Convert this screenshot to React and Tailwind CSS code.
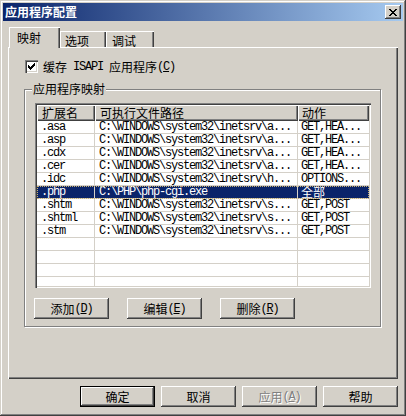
import React from 'react'

const rows = [
  ['.asa', 'C:\\WINDOWS\\system32\\inetsrv\\a...', 'GET,HEA...'],
  ['.asp', 'C:\\WINDOWS\\system32\\inetsrv\\a...', 'GET,HEA...'],
  ['.cdx', 'C:\\WINDOWS\\system32\\inetsrv\\a...', 'GET,HEA...'],
  ['.cer', 'C:\\WINDOWS\\system32\\inetsrv\\a...', 'GET,HEA...'],
  ['.idc', 'C:\\WINDOWS\\system32\\inetsrv\\h...', 'OPTIONS...'],
  ['.php', 'C:\\PHP\\php-cgi.exe', '全部', true],
  ['.shtm', 'C:\\WINDOWS\\system32\\inetsrv\\s...', 'GET,POST'],
  ['.shtml', 'C:\\WINDOWS\\system32\\inetsrv\\s...', 'GET,POST'],
  ['.stm', 'C:\\WINDOWS\\system32\\inetsrv\\s...', 'GET,POST'],
  ['', '', ''],
  ['', '', ''],
  ['', '', ''],
  ['', '', ''],
]

function Mono({ children, className = '' }) {
  return (
    <span className={`font-['Liberation_Mono',monospace] text-[12px] leading-[12px] tracking-[-1.2px] ${className}`}>
      {children}
    </span>
  )
}

function Pixels({ map, className = '' }) {
  const cells = []
  map.forEach((line, y) => {
    line.split('').forEach((c, x) => {
      if (c === '#') cells.push(<rect key={`${x}-${y}`} x={x} y={y} width="1" height="1" />)
    })
  })
  return (
    <svg
      width={map[0].length}
      height={map.length}
      viewBox={`0 0 ${map[0].length} ${map.length}`}
      shapeRendering="crispEdges"
      className={className}
      fill="currentColor"
    >
      {cells}
    </svg>
  )
}

const closeGlyph = [
  '##....##',
  '.##..##.',
  '..####..',
  '...##...',
  '..####..',
  '.##..##.',
  '##....##',
]

const checkGlyph = [
  '......#',
  '.....##',
  '#...###',
  '##.###.',
  '#####..',
  '.###...',
  '..#....',
]

function Accel({ letter }) {
  return (
    <Mono>
      (<span className="underline underline-offset-1">{letter}</span>)
    </Mono>
  )
}

function Btn({ children, isDefault, disabled }) {
  return (
    <div className={`h-[21px] w-[75px] ${isDefault ? 'border border-black' : ''}`}>
      <div
        className={`flex h-full w-full items-center justify-center leading-[13px] shadow-[inset_-1px_-1px_0_#404040,inset_1px_1px_0_#fff,inset_-2px_-2px_0_#808080] ${
          disabled ? 'text-[#808080] [text-shadow:1px_1px_0_#fff]' : ''
        }`}
      >
        {children}
      </div>
    </div>
  )
}

export default function App() {
  return (
    <div className="h-[416px] w-[406px] bg-[#d4d0c8] p-[3px] font-['Noto_Sans_CJK_SC',sans-serif] text-[12px] text-black shadow-[inset_-1px_-1px_0_#404040,inset_1px_1px_0_#d4d0c8,inset_-2px_-2px_0_#808080,inset_2px_2px_0_#fff]">
      {/* title bar */}
      <div className="flex h-[18px] items-center justify-between bg-[linear-gradient(90deg,#0a246a,#a6caf0)] pr-[2px] pl-[2px]">
        <span className="text-[12px] leading-[14px] font-bold text-white">应用程序配置</span>
        <div className="flex h-[14px] w-[16px] items-center justify-center bg-[#d4d0c8] pt-[1px] text-black shadow-[inset_-1px_-1px_0_#404040,inset_1px_1px_0_#fff,inset_-2px_-2px_0_#808080]">
          <Pixels map={closeGlyph} />
        </div>
      </div>

      {/* tabs */}
      <div className="mt-[6px] ml-[6px] flex h-[20px] items-end">
        <div className="relative z-10 -mb-[1px] flex h-[21px] w-[51px] items-start bg-[#d4d0c8] pt-[4px] pl-[8px] leading-[13px] shadow-[inset_1px_1px_0_#fff,inset_-1px_0_0_#404040,inset_-2px_0_0_#808080]">
          映射
        </div>
        <div className="flex h-[16px] w-[46px] items-start pt-[3px] pl-[5px] leading-[13px] shadow-[inset_1px_1px_0_#fff,inset_-1px_0_0_#404040,inset_-2px_0_0_#808080]">
          选项
        </div>
        <div className="flex h-[16px] w-[48px] items-start pt-[3px] pl-[6px] leading-[13px] shadow-[inset_1px_1px_0_#fff,inset_-1px_0_0_#404040,inset_-2px_0_0_#808080]">
          调试
        </div>
      </div>

      {/* tab panel */}
      <div className="mx-[5px] h-[332px] pt-[13px] shadow-[inset_1px_1px_0_#fff,inset_-1px_-1px_0_#404040,inset_-2px_-2px_0_#808080]">
        <div className="ml-[17px] flex h-[13px] items-center gap-[5px]">
          <div className="flex h-[13px] w-[13px] items-center justify-center bg-white shadow-[inset_1px_1px_0_#808080,inset_2px_2px_0_#404040,inset_-1px_-1px_0_#fff,inset_-2px_-2px_0_#d4d0c8]">
            <Pixels map={checkGlyph} />
          </div>
          <span className="flex items-center leading-[13px]">
            缓存<Mono>&nbsp;ISAPI&nbsp;</Mono>应用程序<Accel letter="C" />
          </span>
        </div>

        {/* group box */}
        <div className="relative mt-[16px] ml-[16px] h-[238px] w-[357px] border border-[#808080] shadow-[1px_1px_0_#fff,inset_1px_1px_0_#fff]">
          <span className="absolute -top-[8px] left-[7px] bg-[#d4d0c8] px-[1px] leading-[13px]">应用程序映射</span>

          {/* list view */}
          <div className="mt-[13px] ml-[10px] flex h-[185px] w-[336px] flex-col bg-white p-[2px] shadow-[inset_1px_1px_0_#808080,inset_2px_2px_0_#404040,inset_-1px_-1px_0_#fff,inset_-2px_-2px_0_#d4d0c8]">
            <div className="flex h-[16px] shrink-0 bg-[#d4d0c8] leading-[12px]">
              <div className="flex w-[58px] items-center pb-[1px] pl-[5px] shadow-[inset_1px_1px_0_#fff,inset_-1px_-1px_0_#404040,inset_-2px_-2px_0_#808080]">
                扩展名
              </div>
              <div className="flex w-[203px] items-center pb-[1px] pl-[5px] shadow-[inset_1px_1px_0_#fff,inset_-1px_-1px_0_#404040,inset_-2px_-2px_0_#808080]">
                可执行文件路径
              </div>
              <div className="flex w-[71px] items-center pb-[1px] pl-[4px] shadow-[inset_1px_1px_0_#fff,inset_-1px_-1px_0_#404040,inset_-2px_-2px_0_#808080]">
                动作
              </div>
            </div>
            <div className="flex-1 overflow-hidden">
              {rows.map(([ext, path, action, selected], i) => (
                <div
                  key={i}
                  className={`flex h-[13px] border-b border-[#d4d0c8] ${
                    selected
                      ? 'bg-[#0a246a] text-white outline-1 -outline-offset-1 outline-[#c8b070] outline-dotted'
                      : ''
                  }`}
                >
                  <div className="flex w-[58px] items-center border-r border-[#d4d0c8] pl-[4px]">
                    <Mono>{ext}</Mono>
                  </div>
                  <div className="flex w-[203px] items-center border-r border-[#d4d0c8] pl-[4px]">
                    <Mono>{path}</Mono>
                  </div>
                  <div className="flex w-[71px] items-center pl-[3px]">
                    {action === '全部' ? (
                      <span className="text-[12px] leading-[12px]">{action}</span>
                    ) : (
                      <Mono>{action}</Mono>
                    )}
                  </div>
                </div>
              ))}
            </div>
          </div>

          <div className="mt-[10px] ml-[9px] flex gap-[18px]">
            <Btn>
              添加<Accel letter="D" />
            </Btn>
            <Btn>
              编辑<Accel letter="E" />
            </Btn>
            <Btn>
              删除<Accel letter="R" />
            </Btn>
          </div>
        </div>
      </div>

      {/* dialog buttons */}
      <div className="mt-[7px] mr-[5px] flex justify-end gap-[6px]">
        <Btn isDefault>确定</Btn>
        <Btn>取消</Btn>
        <Btn disabled>
          应用<Accel letter="A" />
        </Btn>
        <Btn>帮助</Btn>
      </div>
    </div>
  )
}
